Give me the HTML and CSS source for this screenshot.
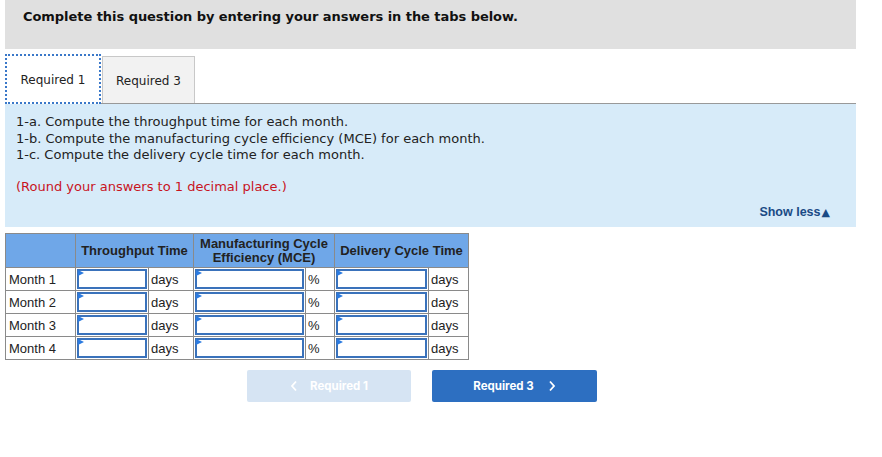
FILE: index.html
```html
<!DOCTYPE html>
<html>
<head>
<meta charset="utf-8">
<link rel="stylesheet" href="styles.css">
</head>
<body>
<div class="wrap">
  <div class="banner">Complete this question by entering your answers in the tabs below.</div>
  <div class="tabs">
    <div class="tab active">Required 1</div>
    <div class="tab">Required 3</div>
  </div>
  <div class="panel">
    <div class="instr">
      <div>1-a. Compute the throughput time for each month.</div>
      <div>1-b. Compute the manufacturing cycle efficiency (MCE) for each month.</div>
      <div>1-c. Compute the delivery cycle time for each month.</div>
    </div>
    <div class="note">(Round your answers to 1 decimal place.)</div>
    <div class="showless">Show less<span class="tri">&#9650;</span></div>
  </div>
  <table class="grid">
    <thead>
      <tr>
        <th class="c-month"></th>
        <th colspan="2" class="c-tp">Throughput Time</th>
        <th colspan="2" class="c-mce">Manufacturing Cycle<br>Efficiency (MCE)</th>
        <th colspan="2" class="c-dc">Delivery Cycle Time</th>
      </tr>
    </thead>
    <tbody>
      <tr>
        <td class="lbl">Month 1</td>
        <td class="in w1"><div class="box"></div></td><td class="unit u1">days</td>
        <td class="in w2"><div class="box"></div></td><td class="unit u2">%</td>
        <td class="in w3"><div class="box"></div></td><td class="unit u3">days</td>
      </tr>
      <tr>
        <td class="lbl">Month 2</td>
        <td class="in w1"><div class="box"></div></td><td class="unit u1">days</td>
        <td class="in w2"><div class="box"></div></td><td class="unit u2">%</td>
        <td class="in w3"><div class="box"></div></td><td class="unit u3">days</td>
      </tr>
      <tr>
        <td class="lbl">Month 3</td>
        <td class="in w1"><div class="box"></div></td><td class="unit u1">days</td>
        <td class="in w2"><div class="box"></div></td><td class="unit u2">%</td>
        <td class="in w3"><div class="box"></div></td><td class="unit u3">days</td>
      </tr>
      <tr>
        <td class="lbl">Month 4</td>
        <td class="in w1"><div class="box"></div></td><td class="unit u1">days</td>
        <td class="in w2"><div class="box"></div></td><td class="unit u2">%</td>
        <td class="in w3"><div class="box"></div></td><td class="unit u3">days</td>
      </tr>
    </tbody>
  </table>
  <div class="nav">
    <div class="btn prev">
      <svg width="8" height="12" viewBox="0 0 8 12"><path d="M6 1.5 L2 6 L6 10.5" fill="none" stroke="#fff" stroke-width="1.8"/></svg>
      <span>Required 1</span>
    </div>
    <div class="btn next">
      <span>Required 3</span>
      <svg width="8" height="12" viewBox="0 0 8 12"><path d="M2 1.5 L6 6 L2 10.5" fill="none" stroke="#fff" stroke-width="1.8"/></svg>
    </div>
  </div>
</div>
</body>
</html>
```

FILE: styles.css
```css
html, body {
  margin: 0;
  padding: 0;
  background: #fff;
}
.wrap {
  margin-left: 5px;
  width: 851px;
  font-family: "DejaVu Sans", Verdana, sans-serif;
}
.banner {
  background: #e0e0e0;
  height: 49px;
  box-sizing: border-box;
  padding: 9px 0 0 18px;
  font-size: 13px;
  font-weight: bold;
  color: #111;
  letter-spacing: -0.05px;
}
.tabs {
  display: flex;
  align-items: flex-end;
  margin-top: 5px;
  height: 49px;
}
.tab {
  box-sizing: border-box;
  font-size: 12px;
  color: #222;
  display: flex;
  align-items: center;
  justify-content: center;
  padding-top: 2px;
}
.tab.active {
  width: 96px;
  height: 50px;
  border: 2px dotted #3a78c9;
  background: #fff;
  margin-bottom: -1px;
  position: relative;
  z-index: 2;
}
.tab:not(.active) {
  width: 93px;
  height: 47px;
  margin-left: 1px;
  background: #f2f2f2;
  border: 1px solid #c8c8c8;
  border-bottom: none;
}
.panel {
  background: #d7ebf9;
  border-top: 1px solid #999;
  height: 124px;
  box-sizing: border-box;
  padding: 10px 26px 0 11px;
  font-size: 13px;
  color: #222;
}
.instr {
  line-height: 16.5px;
}
.note {
  color: #c8141e;
  margin-top: 15px;
  line-height: 16px;
}
.showless {
  text-align: right;
  margin-top: 10px;
  font-family: "Liberation Sans", Arial, sans-serif;
  font-size: 12.5px;
  font-weight: bold;
  color: #1a4a85;
}
.showless .tri {
  font-size: 11px;
  margin-left: 1px;
  font-family: "DejaVu Sans", sans-serif;
}
.grid {
  margin-top: 6px;
  border-collapse: collapse;
  font-family: "Liberation Sans", Arial, sans-serif;
  font-size: 13px;
  color: #222;
}
.grid th {
  background: #6fa7e8;
  border: 1px solid #8a8a8a;
  height: 33px;
  padding: 0;
  font-size: 13px;
  font-weight: bold;
  line-height: 14px;
  color: #222;
}
.grid td {
  border: 1px solid #8a8a8a;
  height: 23px;
  padding: 0;
  box-sizing: border-box;
}
.c-month { width: 69px; }
.lbl {
  width: 69px;
  padding-left: 3px !important;
}
.w1 { width: 73px; }
.w2 { width: 112px; }
.w3 { width: 94px; }
.unit {
  padding-left: 2px !important;
}
.u1 { width: 45px; }
.u2 { width: 29px; }
.u3 { width: 40px; }
.in {
  padding: 1px !important;
}
.box {
  position: relative;
  height: 20px;
  box-sizing: border-box;
  border: 2px solid #3a72bb;
  background: #fff;
}
.box::before {
  content: "";
  position: absolute;
  left: -1px;
  top: -1px;
  border-top: 3px solid transparent;
  border-bottom: 3px solid transparent;
  border-left: 6px solid #2c7be0;
}
.nav {
  display: flex;
  gap: 21px;
  margin-top: 10px;
  margin-left: 242px;
}
.btn {
  height: 32px;
  border-radius: 2px;
  display: flex;
  align-items: center;
  justify-content: center;
  font-family: Inter, "Liberation Sans", sans-serif;
  font-size: 11.5px;
  font-weight: bold;
  color: #fff;
}
.btn.prev {
  width: 164px;
  background: #d6e4f3;
  gap: 12px;
}
.btn.next {
  width: 165px;
  background: #2d6fc1;
  gap: 14px;
}
```
